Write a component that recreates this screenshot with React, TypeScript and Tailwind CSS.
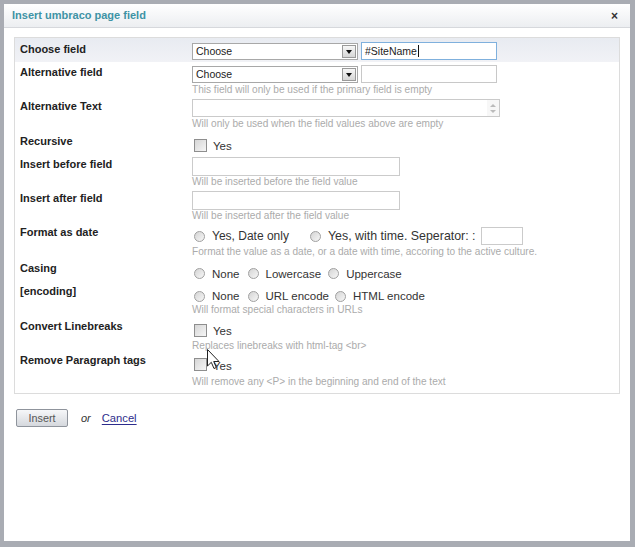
import React from "react";

const FONT = { fontFamily: '"Liberation Sans", Arial, sans-serif' };

function Label({ children, pt }: { children: React.ReactNode; pt: string }) {
  return (
    <div className={`w-[177px] shrink-0 pl-[5px] ${pt} text-[11px] leading-[14px] font-bold text-[#222]`}>
      {children}
    </div>
  );
}

function Hint({ children, mt = "mt-[1px]" }: { children: React.ReactNode; mt?: string }) {
  return <div className={`${mt} text-[10.1px] leading-[11px] text-[#ababab] whitespace-nowrap`}>{children}</div>;
}

function Select() {
  return (
    <div className="w-[166px] h-[17px] border border-[#a8a8a8] bg-white flex items-center">
      <span className="pl-[3px] text-[10.5px] leading-[15px] text-[#222]">Choose</span>
      <div className="ml-auto mr-[1px] w-[14px] h-[13px] border border-[#9a9a9a] bg-gradient-to-b from-[#f7f7f7] to-[#d6d6d6] flex items-center justify-center">
        <div className="w-0 h-0 border-l-[3.5px] border-r-[3.5px] border-t-[4px] border-l-transparent border-r-transparent border-t-[#111]" />
      </div>
    </div>
  );
}

function Checkbox() {
  return (
    <div className="ml-[2px] w-[13px] h-[13px] border border-[#8e8e8e] bg-gradient-to-br from-[#d6d6d6] to-[#f6f6f6] shrink-0" />
  );
}

function Radio() {
  return (
    <div className="w-[11px] h-[11px] rounded-full border border-[#a0a0a0] bg-gradient-to-br from-[#d4d4d4] to-[#f7f7f7] shrink-0" />
  );
}

function RadioItem({ text, ml = "ml-0" }: { text: string; ml?: string }) {
  return (
    <div className={`flex items-center ${ml}`}>
      <Radio />
      <span className="ml-[7px] text-[11.5px] leading-[16px] text-[#333] whitespace-nowrap">{text}</span>
    </div>
  );
}

export default function App() {
  return (
    <div className="relative w-[635px] h-[547px] bg-[#a9acb3] pt-[4px] pl-[4px] pr-[5px] pb-[6px]" style={FONT}>
      <div className="w-full h-full bg-white flex flex-col">
        {/* Title bar */}
        <div className="h-[24px] shrink-0 flex items-center px-[8px] bg-gradient-to-b from-[#ffffff] to-[#eceef1] border-b border-[#d6d8dc]">
          <span className="text-[11px] font-bold text-[#3e93a5]">Insert umbraco page field</span>
          <span className="ml-auto mr-[4px] text-[12px] font-bold leading-none text-[#333]">×</span>
        </div>

        <div className="px-[10px] pt-[9px]">
          {/* Panel */}
          <div className="border border-[#dcdcdc] pb-[6px]">
            {/* Row 1 */}
            <div className="h-[24px] flex bg-gradient-to-b from-[#e8ebf1] to-[#f1f2f6]">
              <Label pt="pt-[4px]">Choose field</Label>
              <div className="pt-[4px] flex items-start">
                <div className="mt-[1px]">
                  <Select />
                </div>
                <div className="ml-[3px] w-[136px] h-[18px] border border-[#7fb0dd] bg-white flex items-center pl-[3px]">
                  <span className="text-[10.5px] text-[#222] leading-[14px]">#SiteName</span>
                  <span className="ml-[1px] w-[1px] h-[12px] bg-[#111]" />
                </div>
              </div>
            </div>

            {/* Row 2 */}
            <div className="h-[34px] flex">
              <Label pt="pt-[3px]">Alternative field</Label>
              <div className="pt-[3px]">
                <div className="flex items-start">
                  <div className="mt-[1px]">
                    <Select />
                  </div>
                  <div className="ml-[3px] w-[136px] h-[18px] border border-[#c8c8c8] bg-white" />
                </div>
                <Hint>This field will only be used if the primary field is empty</Hint>
              </div>
            </div>

            {/* Row 3 */}
            <div className="h-[35px] flex">
              <Label pt="pt-[3px]">Alternative Text</Label>
              <div className="pt-[3px]">
                <div className="w-[308px] h-[18px] border border-[#cacaca] bg-white flex justify-end">
                  <div className="w-[12px] h-full flex flex-col items-center justify-center gap-[3px] bg-[#f7f7f7]">
                    <div className="w-0 h-0 border-l-[3px] border-r-[3px] border-b-[3px] border-l-transparent border-r-transparent border-b-[#bbb]" />
                    <div className="w-0 h-0 border-l-[3px] border-r-[3px] border-t-[3px] border-l-transparent border-r-transparent border-t-[#bbb]" />
                  </div>
                </div>
                <Hint>Will only be used when the field values above are empty</Hint>
              </div>
            </div>

            {/* Row 4 */}
            <div className="h-[22px] flex">
              <Label pt="pt-[3px]">Recursive</Label>
              <div className="pt-[6px] flex items-center">
                <Checkbox />
                <span className="ml-[6px] mt-[2px] text-[11.5px] leading-[16px] text-[#333]">Yes</span>
              </div>
            </div>

            {/* Row 5 */}
            <div className="h-[35px] flex">
              <Label pt="pt-[4px]">Insert before field</Label>
              <div className="pt-[4px]">
                <div className="w-[208px] h-[19px] border border-[#cbcbcb] bg-white" />
                <Hint mt="mt-[0px]">Will be inserted before the field value</Hint>
              </div>
            </div>

            {/* Row 6 */}
            <div className="h-[34px] flex">
              <Label pt="pt-[3px]">Insert after field</Label>
              <div className="pt-[3px]">
                <div className="w-[208px] h-[19px] border border-[#cbcbcb] bg-white" />
                <Hint mt="mt-[0px]">Will be inserted after the field value</Hint>
              </div>
            </div>

            {/* Row 7 */}
            <div className="h-[37px] flex">
              <Label pt="pt-[3px]">Format as date</Label>
              <div className="pt-[5px]">
                <div className="h-[18px] flex items-center pl-[2px]">
                  <Radio />
                  <span className="ml-[7px] text-[12px] text-[#333] whitespace-nowrap">Yes, Date only</span>
                  <div className="ml-[21px]">
                    <Radio />
                  </div>
                  <span className="ml-[7px] text-[12.4px] text-[#333] whitespace-nowrap">Yes, with time. Seperator: :</span>
                  <div className="ml-[5px] w-[42px] h-[18px] border border-[#cbcbcb] bg-white" />
                </div>
                <Hint>Format the value as a date, or a date with time, accoring to the active culture.</Hint>
              </div>
            </div>

            {/* Row 8 */}
            <div className="h-[24px] flex">
              <Label pt="pt-[2px]">Casing</Label>
              <div className="pt-[5px] pl-[2px] flex items-center">
                <RadioItem text="None" />
                <RadioItem text="Lowercase" ml="ml-[8px]" />
                <RadioItem text="Uppercase" ml="ml-[7px]" />
              </div>
            </div>

            {/* Row 9 */}
            <div className="h-[34px] flex">
              <Label pt="pt-[1px]">[encoding]</Label>
              <div className="pt-[5px]">
                <div className="pl-[2px] flex items-center">
                  <RadioItem text="None" />
                  <RadioItem text="URL encode" ml="ml-[8px]" />
                  <RadioItem text="HTML encode" ml="ml-[6px]" />
                </div>
                <Hint mt="mt-[0px]">Will format special characters in URLs</Hint>
              </div>
            </div>

            {/* Row 10 */}
            <div className="h-[34px] flex">
              <Label pt="pt-[2px]">Convert Linebreaks</Label>
              <div className="pt-[4px]">
                <div className="flex items-center">
                  <Checkbox />
                  <span className="ml-[6px] mt-[2px] text-[11.5px] leading-[16px] text-[#333]">Yes</span>
                </div>
                <Hint mt="mt-[1px]">Replaces linebreaks with html-tag &lt;br&gt;</Hint>
              </div>
            </div>

            {/* Row 11 */}
            <div className="h-[36px] flex">
              <Label pt="pt-[2px]">Remove Paragraph tags</Label>
              <div className="pt-[4px]">
                <div className="flex items-center">
                  <Checkbox />
                  <span className="ml-[6px] mt-[3px] text-[11.5px] leading-[16px] text-[#333]">Yes</span>
                </div>
                <Hint mt="mt-[2px]">Will remove any &lt;P&gt; in the beginning and end of the text</Hint>
              </div>
            </div>
          </div>

          {/* Buttons */}
          <div className="mt-[15px] ml-[2px] flex items-center">
            <button className="w-[52px] h-[18px] border border-[#8f949c] rounded-[2px] bg-gradient-to-b from-[#f6f7f9] to-[#d5d8dd] text-[10.8px] leading-[14px] text-[#555]">
              Insert
            </button>
            <span className="ml-[13px] text-[11px] italic text-[#333]">or</span>
            <a className="ml-[11px] text-[11.2px] text-[#2c2c8c] underline underline-offset-[2px]">Cancel</a>
          </div>
        </div>
      </div>

      {/* Mouse cursor */}
      <svg className="absolute left-[207px] top-[349px]" width="13" height="21" viewBox="0 0 13 21">
        <path d="M0.5 0.5 L0.5 17 L4.3 13.3 L7 19.5 L9.3 18.5 L6.7 12.5 L12 12.5 Z" fill="#fff" stroke="#222" strokeWidth="1" strokeLinejoin="round" />
      </svg>
    </div>
  );
}
